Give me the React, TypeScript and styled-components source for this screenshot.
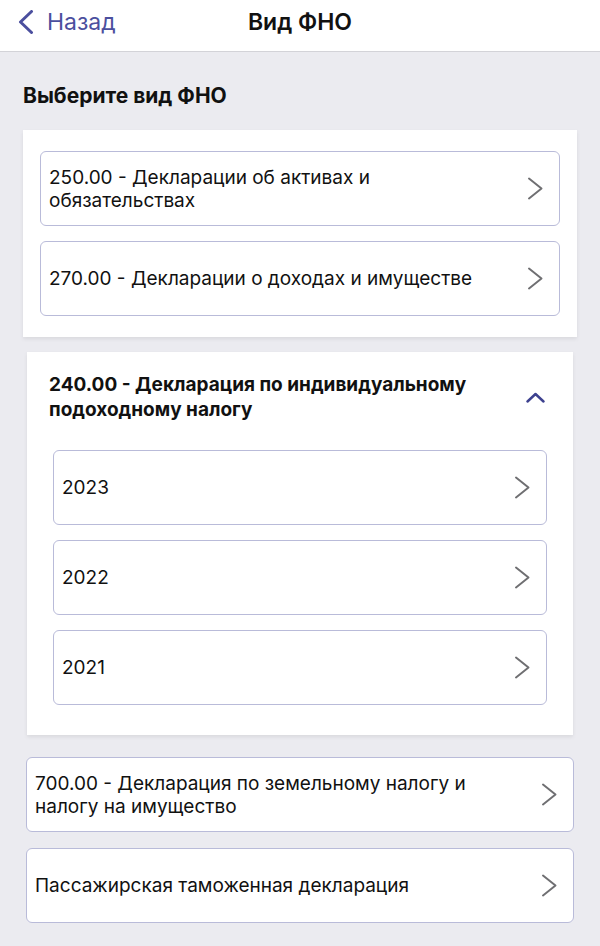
import React from "react";
import styled, { createGlobalStyle } from "styled-components";

const GlobalStyle = createGlobalStyle`
  html, body { margin: 0; padding: 0; background: #ebebf0; }
  body { font-family: Inter, "Noto Sans", "Liberation Sans", sans-serif; color: #111; -webkit-font-smoothing: antialiased; }
  * { box-sizing: border-box; }
`;

const Page = styled.div`
  width: 600px;
  min-height: 946px;
  background: #ebebf0;
`;

const Header = styled.header`
  height: 52px;
  background: #fff;
  border-bottom: 1px solid #d3d3d8;
  display: grid;
  grid-template-columns: 1fr auto 1fr;
  align-items: center;
  padding: 0 18px;
`;

const Back = styled.button`
  justify-self: start;
  display: flex;
  align-items: center;
  gap: 13px;
  background: none;
  border: 0;
  padding: 0;
  color: #4b4f9e;
  font-family: inherit;
  font-size: 23px;
  line-height: 26px;
  margin-top: -8px;
`;

const Title = styled.h1`
  margin: -8px 0 0;
  font-size: 23px;
  font-weight: 600;
  line-height: 26px;
  color: #111;
`;

const Content = styled.main`
  display: flex;
  flex-direction: column;
  padding: 32px 0 0;
`;

const SectionTitle = styled.h2`
  margin: 0 23px 22px;
  font-size: 21px;
  font-weight: 700;
  line-height: 24px;
  color: #111;
`;

const Card = styled.section<{ $mx: number; $pt: number; $pb: number; $px: number; $gap: number }>`
  margin: 0 ${(p) => p.$mx}px;
  background: #fff;
  box-shadow: 0 2px 4px rgba(0, 0, 0, 0.08);
  padding: ${(p) => p.$pt}px ${(p) => p.$px}px ${(p) => p.$pb}px;
  display: flex;
  flex-direction: column;
  gap: ${(p) => p.$gap}px;
`;

const Item = styled.button`
  width: 100%;
  height: 75px;
  display: flex;
  align-items: center;
  justify-content: space-between;
  gap: 12px;
  padding: 0 15px 0 8px;
  background: #fff;
  border: 1px solid #b9bbd9;
  border-radius: 6px;
  font-family: inherit;
  text-align: left;
  cursor: pointer;
`;

const ItemText = styled.span`
  font-size: 19px;
  line-height: 23px;
  color: #111;
  max-width: 440px;
`;

const Standalone = styled.div`
  margin: 22px 26px 0;
  display: flex;
  flex-direction: column;
  gap: 16px;
`;

const GroupHead = styled.div`
  display: flex;
  align-items: center;
  justify-content: space-between;
  padding: 20px 28px 28px 22px;
`;

const GroupTitle = styled.h3`
  margin: 0;
  font-size: 19px;
  font-weight: 700;
  line-height: 25px;
  color: #111;
`;

const GroupBody = styled.div`
  display: flex;
  flex-direction: column;
  gap: 15px;
  padding: 0 26px 30px;
`;

const Gap = styled.div`
  height: 15px;
`;

const ChevronRight = () => (
  <svg width="17" height="23" viewBox="0 0 17 23" fill="none">
    <path d="M2 1.5 L14.5 11.5 L2 21.5" stroke="#6f6f72" strokeWidth="2" strokeLinecap="round" strokeLinejoin="round" />
  </svg>
);

const ChevronUp = () => (
  <svg width="19" height="11" viewBox="0 0 19 11" fill="none">
    <path d="M1.5 9.5 L9.5 2 L17.5 9.5" stroke="#3d418f" strokeWidth="2.4" strokeLinecap="round" strokeLinejoin="round" />
  </svg>
);

const BackChevron = () => (
  <svg width="16" height="24" viewBox="0 0 16 24" fill="none">
    <path d="M13.5 1.5 L2.5 12 L13.5 22.5" stroke="#4b4f9e" strokeWidth="3" strokeLinecap="round" strokeLinejoin="round" />
  </svg>
);

const Row = ({ text }: { text: string }) => (
  <Item>
    <ItemText>{text}</ItemText>
    <ChevronRight />
  </Item>
);

export default function App() {
  return (
    <Page>
      <GlobalStyle />
      <Header>
        <Back>
          <BackChevron />
          Назад
        </Back>
        <Title>Вид ФНО</Title>
        <span />
      </Header>
      <Content>
        <SectionTitle>Выберите вид ФНО</SectionTitle>
        <Card $mx={23} $pt={21} $pb={21} $px={17} $gap={15}>
          <Row text="250.00 - Декларации об активах и обязательствах" />
          <Row text="270.00 - Декларации о доходах и имуществе" />
        </Card>
        <Gap />
        <Card $mx={27} $pt={0} $pb={0} $px={0} $gap={0}>
          <GroupHead>
            <GroupTitle>
              240.00 - Декларация по индивидуальному
              <br />
              подоходному налогу
            </GroupTitle>
            <ChevronUp />
          </GroupHead>
          <GroupBody>
            <Row text="2023" />
            <Row text="2022" />
            <Row text="2021" />
          </GroupBody>
        </Card>
        <Standalone>
          <Row text="700.00 - Декларация по земельному налогу и налогу на имущество" />
          <Row text="Пассажирская таможенная декларация" />
        </Standalone>
      </Content>
    </Page>
  );
}
